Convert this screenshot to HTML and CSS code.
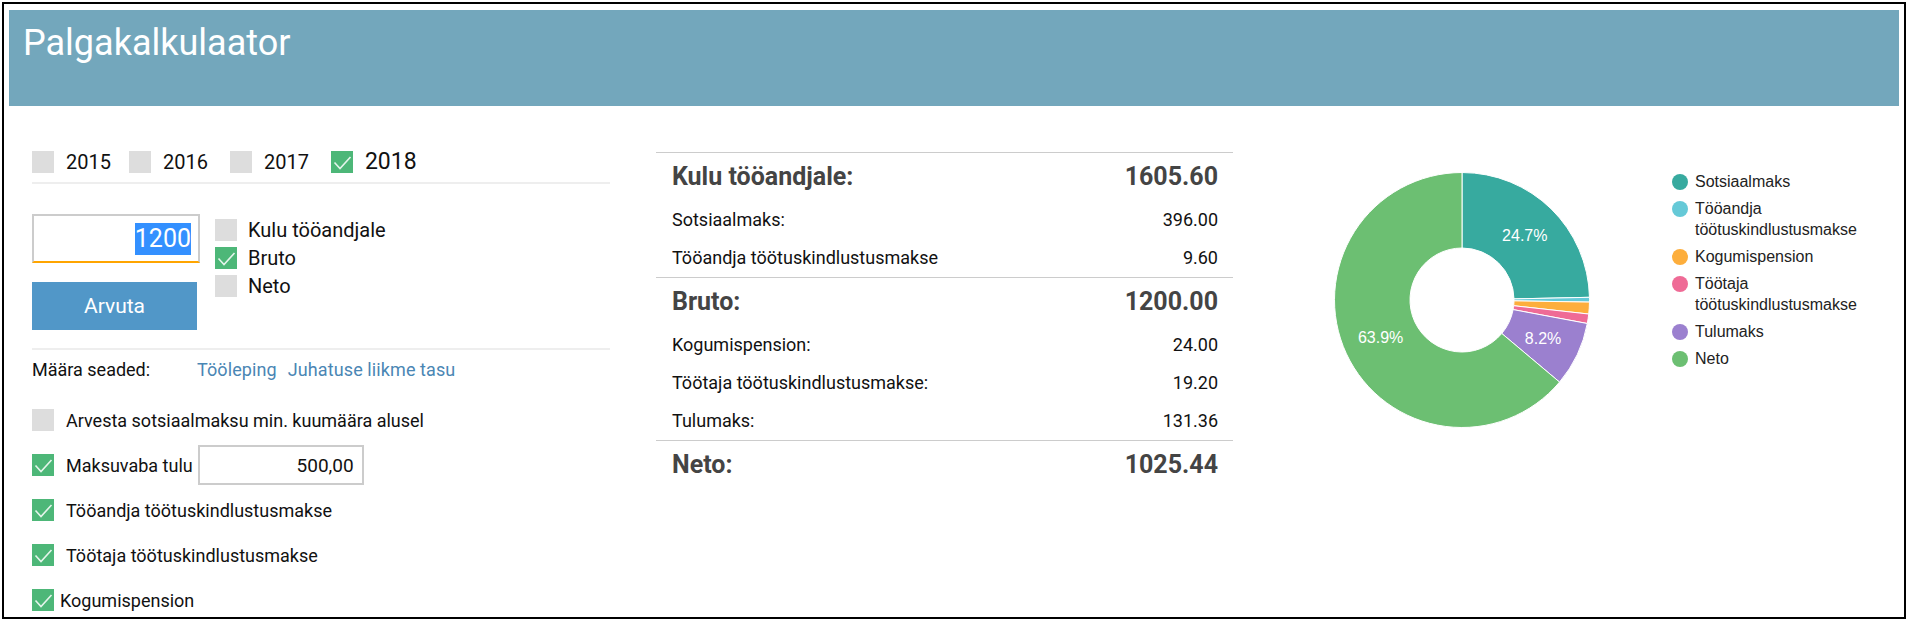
FILE: index.html
```html
<!DOCTYPE html>
<html lang="et">
<head>
  <meta charset="UTF-8" />
  <title>Palgakalkulaator</title>
  <link rel="stylesheet" href="styles.css">
</head>
<body>

  <div class="frame">
    <header class="topbar">
      <h1>Palgakalkulaator</h1>
    </header>

    <main class="content">
      <!-- Sisendid -->
      <section class="inputs">
        <div class="years">
          <label class="year-item"><span class="box"></span>2015</label>
          <label class="year-item"><span class="box"></span>2016</label>
          <label class="year-item"><span class="box"></span>2017</label>
          <label class="year-item active"><span class="box checked"><svg viewBox="0 0 22 22"><polyline points="3.5,11.5 9,17.5 19.5,6"/></svg></span>2018</label>
        </div>

        <div class="calc">
          <div class="calc-left">
            <div class="amount"><span class="amount-value">1200</span></div>
            <button class="calc-btn">Arvuta</button>
          </div>
          <div class="calc-types">
            <label class="type-item"><span class="box"></span>Kulu tööandjale</label>
            <label class="type-item"><span class="box checked"><svg viewBox="0 0 22 22"><polyline points="3.5,11.5 9,17.5 19.5,6"/></svg></span>Bruto</label>
            <label class="type-item"><span class="box"></span>Neto</label>
          </div>
        </div>

        <div class="presets">
          <span class="presets-label">Määra seaded:</span>
          <a href="#">Tööleping</a>
          <a href="#">Juhatuse liikme tasu</a>
        </div>

        <div class="options">
          <label class="option"><span class="box"></span>Arvesta sotsiaalmaksu min. kuumäära alusel</label>
          <label class="option"><span class="box checked"><svg viewBox="0 0 22 22"><polyline points="3.5,11.5 9,17.5 19.5,6"/></svg></span>Maksuvaba tulu<span class="small-input">500,00</span></label>
          <label class="option"><span class="box checked"><svg viewBox="0 0 22 22"><polyline points="3.5,11.5 9,17.5 19.5,6"/></svg></span>Tööandja töötuskindlustusmakse</label>
          <label class="option"><span class="box checked"><svg viewBox="0 0 22 22"><polyline points="3.5,11.5 9,17.5 19.5,6"/></svg></span>Töötaja töötuskindlustusmakse</label>
          <label class="option"><span class="box checked tight"><svg viewBox="0 0 22 22"><polyline points="3.5,11.5 9,17.5 19.5,6"/></svg></span>Kogumispension</label>
        </div>
      </section>

      <!-- Tulemused -->
      <section class="results">
        <div class="result-group">
          <div class="result-row total"><span>Kulu tööandjale:</span><span>1605.60</span></div>
          <div class="result-row"><span>Sotsiaalmaks:</span><span>396.00</span></div>
          <div class="result-row"><span>Tööandja töötuskindlustusmakse</span><span>9.60</span></div>
        </div>
        <div class="result-group">
          <div class="result-row total"><span>Bruto:</span><span>1200.00</span></div>
          <div class="result-row"><span>Kogumispension:</span><span>24.00</span></div>
          <div class="result-row"><span>Töötaja töötuskindlustusmakse:</span><span>19.20</span></div>
          <div class="result-row"><span>Tulumaks:</span><span>131.36</span></div>
        </div>
        <div class="result-group">
          <div class="result-row total"><span>Neto:</span><span>1025.44</span></div>
        </div>
      </section>

      <!-- Graafik -->
      <section class="chart">
        <svg id="donut" class="donut" viewBox="0 0 260 260"></svg>
        <ul class="legend">
          <li><span class="dot" style="background:#37aa9f"></span>Sotsiaalmaks</li>
          <li><span class="dot" style="background:#65c9d7"></span>Tööandja töötuskindlustusmakse</li>
          <li><span class="dot" style="background:#fdae3c"></span>Kogumispension</li>
          <li><span class="dot" style="background:#ef6b96"></span>Töötaja töötuskindlustusmakse</li>
          <li><span class="dot" style="background:#9b80cf"></span>Tulumaks</li>
          <li><span class="dot" style="background:#6cbf72"></span>Neto</li>
        </ul>
      </section>
    </main>
  </div>

  <script>
    const slices = [
      { value: 396.00, color: '#37aa9f' },
      { value: 9.60, color: '#65c9d7' },
      { value: 24.00, color: '#fdae3c' },
      { value: 19.20, color: '#ef6b96' },
      { value: 131.36, color: '#9b80cf' },
      { value: 1025.44, color: '#6cbf72' }
    ];

    function drawDonut() {
      const svg = document.getElementById('donut');
      const ns = 'http://www.w3.org/2000/svg';
      const cx = 130, cy = 130, R = 127.5, r = 52;
      const total = slices.reduce((sum, s) => sum + s.value, 0);

      const pt = (a, rad) => (cx + rad * Math.sin(a)).toFixed(2) + ' ' + (cy - rad * Math.cos(a)).toFixed(2);

      let start = 0;
      slices.forEach(s => {
        const a0 = start / total * 2 * Math.PI;
        const a1 = (start + s.value) / total * 2 * Math.PI;
        const big = a1 - a0 > Math.PI ? 1 : 0;

        const path = document.createElementNS(ns, 'path');
        path.setAttribute('d',
          'M' + pt(a0, R) + ' A' + R + ' ' + R + ' 0 ' + big + ' 1 ' + pt(a1, R) +
          ' L' + pt(a1, r) + ' A' + r + ' ' + r + ' 0 ' + big + ' 0 ' + pt(a0, r) + ' Z');
        path.setAttribute('fill', s.color);
        svg.appendChild(path);

        // protsent ainult suurematele lõikudele
        const share = s.value / total;
        if (share > 0.05) {
          const mid = (a0 + a1) / 2;
          const rm = (R + r) / 2;
          const text = document.createElementNS(ns, 'text');
          text.setAttribute('x', (cx + rm * Math.sin(mid)).toFixed(1));
          text.setAttribute('y', (cy - rm * Math.cos(mid) + 5.5).toFixed(1));
          text.setAttribute('class', 'slice-label');
          text.textContent = (share * 100).toFixed(1) + '%';
          svg.appendChild(text);
        }
        start += s.value;
      });
    }

    drawDonut();
  </script>

</body>
</html>
```

FILE: styles.css
```css
* {
  box-sizing: border-box;
  margin: 0;
  padding: 0;
}

body {
  font-family: Roboto, 'Liberation Sans', sans-serif;
  color: #111;
  background: #fff;
}

.frame {
  width: 1904px;
  height: 617px;
  margin: 2px;
  border: 2px solid #000;
  overflow: hidden;
}

.topbar {
  height: 96px;
  margin: 6px 5px 0;
  padding: 13px 14px 0;
  background: #73a7bc;
}

.topbar h1 {
  font-size: 36px;
  font-weight: 400;
  line-height: 40px;
  color: #fff;
}

.content {
  display: flex;
  align-items: flex-start;
  padding-left: 28px;
}

/* checkboxes */
.box {
  width: 22px;
  height: 22px;
  flex-shrink: 0;
  background: #ddd;
  margin-right: 12px;
}

.box.checked {
  background: #4db778;
}

.box svg {
  display: block;
  width: 22px;
  height: 22px;
}

.box polyline {
  fill: none;
  stroke: rgba(255, 255, 255, 0.85);
  stroke-width: 1.6;
}

/* left column */
.inputs {
  width: 578px;
  margin-top: 44px;
}

.years {
  display: flex;
  align-items: center;
  padding-bottom: 8px;
  border-bottom: 2px solid #eee;
}

.year-item {
  display: flex;
  align-items: center;
  margin-right: 22px;
  font-size: 20px;
  line-height: 24px;
}

.year-item:first-child {
  margin-right: 18px;
}

.year-item.active {
  font-size: 23px;
}

.calc {
  display: flex;
  margin-top: 30px;
}

.amount {
  width: 168px;
  height: 49px;
  display: flex;
  align-items: center;
  justify-content: flex-end;
  padding-right: 7px;
  border: 2px solid #ccc;
  border-bottom-color: #ffa500;
  font-size: 25px;
}

.amount-value {
  background: #3390ff;
  color: #fff;
  line-height: 32px;
}

.calc-btn {
  display: block;
  width: 165px;
  height: 48px;
  margin-top: 19px;
  border: none;
  background: #5197c8;
  color: #fff;
  font-family: inherit;
  font-size: 21px;
}

.calc-types {
  margin-left: 15px;
  padding-top: 2px;
}

.type-item {
  display: flex;
  align-items: center;
  height: 28px;
  font-size: 20px;
}

.type-item .box {
  margin-right: 11px;
}

.presets {
  display: flex;
  margin-top: 18px;
  padding-top: 9px;
  border-top: 2px solid #eee;
  font-size: 18px;
  line-height: 21px;
}

.presets-label {
  width: 165px;
}

.presets a {
  color: #4a86b4;
  text-decoration: none;
  margin-right: 11px;
  letter-spacing: 0.1px;
}

.options {
  margin-top: 20px;
}

.option {
  display: flex;
  align-items: center;
  height: 40px;
  margin-bottom: 5px;
  font-size: 18px;
}

.option .box.tight {
  margin-right: 6px;
}

.small-input {
  width: 166px;
  height: 40px;
  margin-left: 5px;
  display: flex;
  align-items: center;
  justify-content: flex-end;
  padding-right: 8px;
  border: 2px solid #ccc;
  font-size: 19px;
}

/* middle column */
.results {
  width: 577px;
  margin-left: 46px;
  margin-top: 46px;
}

.result-group {
  border-top: 1px solid #ccc;
}

.result-row {
  display: flex;
  justify-content: space-between;
  padding: 9px 15px 9px 16px;
  font-size: 18px;
  line-height: 20px;
}

.result-row.total {
  padding-top: 10px;
  padding-bottom: 10px;
  font-size: 25px;
  line-height: 28px;
  font-weight: 700;
  color: #444;
}

/* chart */
.chart {
  display: flex;
  align-items: flex-start;
  margin-left: 99px;
  margin-top: 64px;
}

.donut {
  width: 260px;
  height: 260px;
  flex-shrink: 0;
}

.donut path {
  stroke: #fff;
  stroke-width: 1;
}

.slice-label {
  fill: #fff;
  font-family: 'Liberation Sans', Arial, sans-serif;
  font-size: 16px;
  text-anchor: middle;
}

.legend {
  width: 200px;
  margin-left: 80px;
  margin-top: 1px;
  list-style: none;
  font-family: 'Liberation Sans', Arial, sans-serif;
  font-size: 16px;
  line-height: 21px;
  color: #222;
}

.legend li {
  display: flex;
  margin-bottom: 6px;
}

.dot {
  width: 16px;
  height: 16px;
  flex-shrink: 0;
  border-radius: 50%;
  margin: 2.5px 7px 0 0;
}
```
